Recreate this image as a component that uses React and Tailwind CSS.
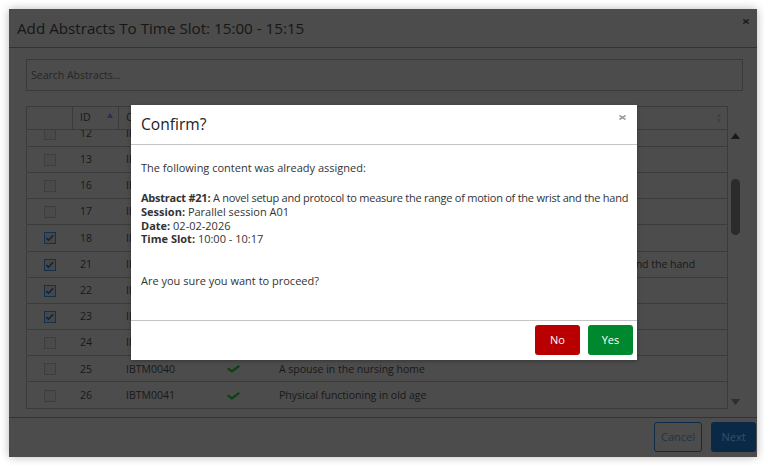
import React from 'react';

const CHECK =
  'M173.898 439.404l-166.4-166.4c-9.997-9.997-9.997-26.206 0-36.204l36.203-36.204c9.997-9.998 26.207-9.998 36.204 0L192 312.69 432.095 72.596c9.997-9.997 26.207-9.997 36.204 0l36.203 36.204c9.997 9.997 9.997 26.206 0 36.204l-294.4 294.401c-9.998 9.997-26.207 9.997-36.204-.001z';
const TIMES =
  'M242.72 256l100.07-100.07c12.28-12.28 12.28-32.19 0-44.48l-22.24-22.24c-12.28-12.28-32.19-12.28-44.48 0L176 189.280 75.93 89.21c-12.28-12.28-32.19-12.28-44.48 0L9.21 111.45c-12.28 12.28-12.28 32.19 0 44.48L109.28 256 9.21 356.07c-12.28 12.28-12.28 32.19 0 44.48l22.24 22.24c12.28 12.28 32.2 12.28 44.48 0L176 322.72l100.07 100.07c12.28 12.28 32.2 12.28 44.48 0l22.24-22.24c12.28-12.28 12.28-32.19 0-44.48L242.72 256z';

function CheckIcon({ className }) {
  return (
    <svg viewBox="0 0 512 512" className={className} fill="currentColor" preserveAspectRatio="none">
      <path d={CHECK} />
    </svg>
  );
}

function TimesIcon({ className }) {
  return (
    <svg viewBox="0 0 352 512" className={className} fill="currentColor" preserveAspectRatio="none">
      <path d={TIMES} />
    </svg>
  );
}

const rows = [
  { id: 12, code: 'IBTM0027', title: 'Balance training', checked: false },
  { id: 13, code: 'IBTM0028', title: 'Gait analysis', checked: false },
  { id: 16, code: 'IBTM0031', title: 'Muscle fatigue', checked: false },
  { id: 17, code: 'IBTM0032', title: 'Pain in athletes', checked: false },
  { id: 18, code: 'IBTM0033', title: 'Sleep and recovery', checked: true },
  {
    id: 21,
    code: 'IBTM0036',
    title: 'A novel setup and protocol to measure the range of motion of the wrist and the hand',
    checked: true,
  },
  { id: 22, code: 'IBTM0037', title: 'Hip fracture care', checked: true },
  { id: 23, code: 'IBTM0038', title: 'Knee osteoarthritis', checked: true },
  { id: 24, code: 'IBTM0039', title: 'Fall prevention', checked: false },
  { id: 25, code: 'IBTM0040', title: 'A spouse in the nursing home', checked: false },
  { id: 26, code: 'IBTM0041', title: 'Physical functioning in old age', checked: false },
];

function Checkbox({ checked }) {
  if (checked) {
    return (
      <span className="w-[12px] h-[12px] border border-[#13304e] bg-[#474747] flex items-center justify-center">
        <svg viewBox="0 0 12 12" className="w-[10px] h-[10px]">
          <polyline points="1.5,6 4.2,8.6 9.8,2.6" fill="none" stroke="#0b233d" strokeWidth="1.8" />
        </svg>
      </span>
    );
  }
  return <span className="w-[12px] h-[12px] border border-[#3e3e3e] bg-[#4a4a4a]" />;
}

export default function App() {
  return (
    <div className="w-[765px] h-[465px] bg-white p-[9px] font-['Open_Sans',sans-serif]">
      <div className="relative w-[748px] h-[448px] bg-[#4c4c4c] shadow-[0_0_9px_rgba(0,0,0,0.28)] flex flex-col">
        {/* header */}
        <div className="h-[39px] shrink-0 border-b border-[#333333] pl-[8px] pt-[1px] flex items-center">
          <h2 className="text-[15.2px] text-[#161616] leading-none">Add Abstracts To Time Slot: 15:00 - 15:15</h2>
        </div>
        <button className="absolute left-[734px] top-[9px] w-[6px] h-[7px] text-[#1c1c1c]">
          <TimesIcon className="w-[6px] h-[7px]" />
        </button>

        {/* body */}
        <div className="pl-[17px] pr-[14px] pt-[11px]">
          <div className="h-[32px] border border-[#3a3a3a] flex items-center pl-[4px] pt-[1px] text-[10.5px] text-[#262626]">
            Search Abstracts...
          </div>

          <div className="mt-[15px] flex">
            <div className="w-[702px] border-x border-t border-[#3b3b3b] text-[10.5px] text-[#181818]">
              {/* table header */}
              <div className="h-[23px] flex border-b border-[#3b3b3b]">
                <div className="w-[46px] border-r border-[#3b3b3b]" />
                <div className="w-[46px] border-r border-[#3b3b3b] flex items-center justify-between pl-[7px] pr-[5px]">
                  <span>ID</span>
                  <svg viewBox="0 0 6 5" className="w-[6px] h-[5px] mb-[6px]">
                    <polygon points="0,5 3,0 6,5" fill="#2e2e58" />
                  </svg>
                </div>
                <div className="w-[92px] border-r border-[#3b3b3b] flex items-center pl-[7px]">Code</div>
                <div className="w-[61px] border-r border-[#3b3b3b] flex items-center pl-[7px]">OK</div>
                <div className="flex-1 flex items-center justify-between pl-[7px] pr-[6px]">
                  <span>Title</span>
                  <svg viewBox="0 0 4 10" className="w-[4px] h-[10px]">
                    <polygon points="0,4 2,0 4,4" fill="#404040" />
                    <polygon points="0,6 2,10 4,6" fill="#404040" />
                  </svg>
                </div>
              </div>
              {/* table body */}
              <div className="h-[279px] overflow-hidden">
                <div className="-mt-[9.4px]">
                  {rows.map((r) => (
                    <div key={r.id} className="h-[26.2px] flex items-center border-b border-[#3b3b3b] pt-[1px]">
                      <div className="w-[46px] flex justify-center">
                        <Checkbox checked={r.checked} />
                      </div>
                      <div className="w-[46px] pl-[7px]">{r.id}</div>
                      <div className="w-[92px] pl-[7px]">{r.code}</div>
                      <div className="w-[61px] pl-[16px] flex items-center">
                        <CheckIcon className="w-[13px] h-[10px] text-[#0a4210]" />
                      </div>
                      <div className="flex-1 pl-[7px] whitespace-nowrap">{r.title}</div>
                    </div>
                  ))}
                </div>
              </div>
            </div>
            {/* scrollbar */}
            <div className="w-[15px] pt-[23px] flex flex-col">
              <div className="h-[279px] flex flex-col items-center">
                <svg viewBox="0 0 9 6" className="w-[9px] h-[6px] mt-[4px]">
                  <polygon points="0,6 4.5,0 9,6" fill="#1a1a1a" />
                </svg>
                <div className="w-[9px] h-[56px] mt-[40px] rounded-full bg-[#2b2b2b]" />
                <div className="flex-1" />
                <svg viewBox="0 0 9 6" className="w-[9px] h-[6px] mb-[3px]">
                  <polygon points="0,0 4.5,6 9,0" fill="#2e2e2e" />
                </svg>
              </div>
            </div>
          </div>
        </div>

        {/* footer */}
        <div className="mt-auto h-[40px] border-t border-[#333333] flex justify-end items-start pt-[4px] pr-[1px] gap-[9px] text-[11px]">
          <button className="w-[48px] h-[30px] border border-[#0c2c4a] rounded-[3px] text-[#1f3348]">Cancel</button>
          <button className="w-[45px] h-[30px] bg-[#0a2946] rounded-[3px] text-[#36516b]">Next</button>
        </div>

        {/* confirm dialog */}
        <div className="absolute left-[122px] top-[96px] w-[506px] h-[255px] bg-white shadow-[0_1px_4px_rgba(0,0,0,0.3)] flex flex-col">
          <div className="h-[40px] shrink-0 border-b border-[#c4c4c4] pl-[10px] pt-[1px] flex items-center">
            <h3 className="text-[15.6px] text-[#222222] leading-none">Confirm?</h3>
          </div>
          <button className="absolute left-[488px] top-[9px] w-[7px] h-[7px] text-[#9a9a9a]">
            <TimesIcon className="w-[7px] h-[7px]" />
          </button>
          <div className="flex-1 pl-[10px] pt-[16px] text-[11px] leading-[13.4px] text-[#333333]">
            <p>The following content was already assigned:</p>
            <p className="mt-[16.6px] whitespace-nowrap tracking-[-0.25px]">
              <b>Abstract #21:</b> A novel setup and protocol to measure the range of motion of the wrist and the hand
            </p>
            <p className="mt-[1px]">
              <b>Session:</b> Parallel session A01
            </p>
            <p>
              <b>Date:</b> 02-02-2026
            </p>
            <p>
              <b>Time Slot:</b> 10:00 - 10:17
            </p>
            <p className="mt-[28.1px]">Are you sure you want to proceed?</p>
          </div>
          <div className="h-[40px] shrink-0 border-t border-[#c4c4c4] flex justify-end items-start pt-[4px] pr-[4px] gap-[8px] text-[11px] text-white">
            <button className="w-[45px] h-[30px] rounded-[3px] bg-[#b80000]">No</button>
            <button className="w-[45px] h-[30px] rounded-[3px] bg-[#00882f]">Yes</button>
          </div>
        </div>
      </div>
    </div>
  );
}
